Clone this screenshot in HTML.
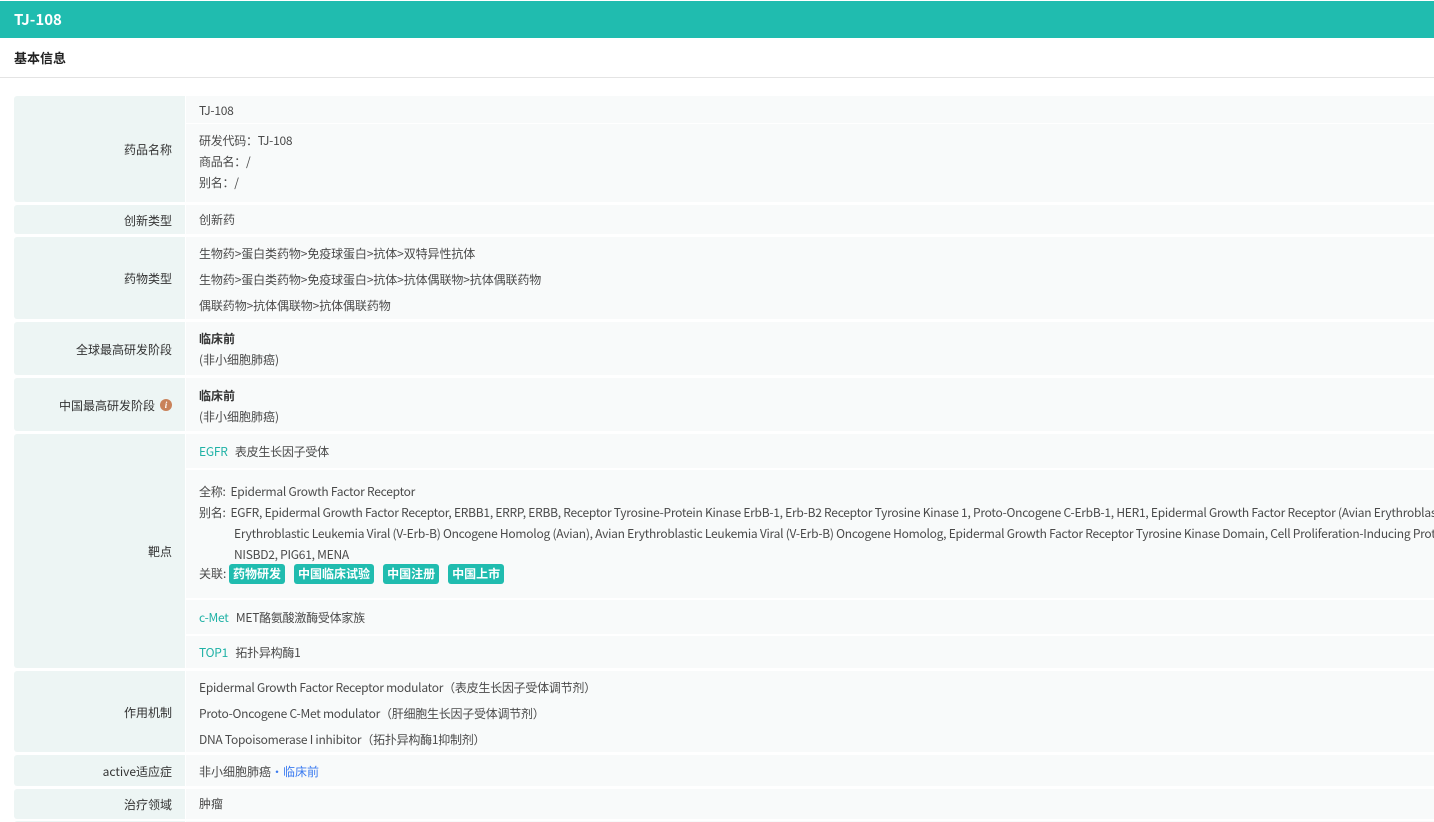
<!DOCTYPE html>
<html><head><meta charset="utf-8"><style>
*{margin:0;padding:0;box-sizing:border-box}
html,body{width:1434px;height:822px;overflow:hidden}
body{background:#fff;font-family:"Noto Sans CJK SC","Liberation Sans",sans-serif;font-size:12px;color:#444;position:relative}
#w{position:absolute;left:0;top:0;width:1434px;height:822px;overflow:hidden}
.hdr{position:absolute;left:0;top:1px;width:1434px;height:37px;background:#20bcaf;color:#fff;font-weight:bold;font-size:15px;line-height:37px;padding-left:14px}
.sec{position:absolute;left:14px;top:48px;line-height:20px;font-weight:bold;font-size:13px;color:#222}
.line{position:absolute;left:0;top:77px;width:1434px;height:1px;background:#e4e4e4}
.l{position:absolute;left:14px;width:171px;background:#edf5f4;text-align:right;padding-right:13px;display:flex;align-items:center;justify-content:flex-end;color:#333;border-radius:3px 0 0 3px;padding-top:1px}
.v{position:absolute;left:186px;width:1248px;background:#f8fafa}
.t{position:absolute;left:199px;white-space:nowrap;color:#4a4a4a;line-height:18px;letter-spacing:-0.25px;margin-top:1px}
.c{letter-spacing:0}
.teal{color:#20b2a6}
.b{font-weight:bold;color:#333}
.tag{display:inline-block;background:#20bcaf;color:#fff;font-weight:bold;padding:0 4px;border-radius:3px;height:20px;line-height:20px;margin-right:9px;letter-spacing:0}
.i{display:inline-block;width:12px;height:12px;border-radius:50%;background:#c9825a;color:#fff;font-size:9px;line-height:12px;text-align:center;font-style:italic;font-weight:bold;margin-left:5px;font-family:"Liberation Serif",serif}
</style></head><body><div id="w">
<div class="hdr">TJ-108</div>
<div class="sec">基本信息</div>
<div class="line"></div>

<div class="l" style="top:96px;height:106px">药品名称</div>
<div class="v" style="top:96px;height:27px"></div>
<div class="v" style="top:124px;height:78px"></div>
<div class="t" style="top:101px">TJ-108</div>
<div class="t" style="top:128.5px;line-height:21px">研发代码：TJ-108<br>商品名：/<br>别名：/</div>

<div class="l" style="top:205px;height:29px">创新类型</div>
<div class="v" style="top:205px;height:29px"></div>
<div class="t c" style="top:210px">创新药</div>

<div class="l" style="top:237px;height:82px">药物类型</div>
<div class="v" style="top:237px;height:82px"></div>
<div class="t" style="top:240px;line-height:26px;letter-spacing:-0.1px">生物药&gt;蛋白类药物&gt;免疫球蛋白&gt;抗体&gt;双特异性抗体<br>生物药&gt;蛋白类药物&gt;免疫球蛋白&gt;抗体&gt;抗体偶联物&gt;抗体偶联药物<br>偶联药物&gt;抗体偶联物&gt;抗体偶联药物</div>

<div class="l" style="top:322px;height:53px">全球最高研发阶段</div>
<div class="v" style="top:322px;height:53px"></div>
<div class="t c" style="top:326.5px;line-height:21px"><span class="b">临床前</span><br>(非小细胞肺癌)</div>

<div class="l" style="top:378px;height:53px">中国最高研发阶段<span class="i">i</span></div>
<div class="v" style="top:378px;height:53px"></div>
<div class="t c" style="top:383.5px;line-height:21px"><span class="b">临床前</span><br>(非小细胞肺癌)</div>

<div class="l" style="top:434px;height:234px">靶点</div>
<div class="v" style="top:434px;height:34px"></div>
<div class="v" style="top:470px;height:128px"></div>
<div class="v" style="top:600px;height:34px"></div>
<div class="v" style="top:636px;height:32px"></div>
<div class="t" style="top:442px"><span class="teal">EGFR</span>&nbsp;&nbsp; 表皮生长因子受体</div>
<div class="t" style="top:479.5px;line-height:21px">全称:&nbsp; Epidermal Growth Factor Receptor<br>别名:&nbsp; EGFR, Epidermal Growth Factor Receptor, ERBB1, ERRP, ERBB, Receptor Tyrosine-Protein Kinase ErbB-1, Erb-B2 Receptor Tyrosine Kinase 1, Proto-Oncogene C-ErbB-1, HER1, Epidermal Growth Factor Receptor (Avian Erythroblastic Leukemia</div>
<div class="t" style="top:521.5px;left:234px;line-height:21px">Erythroblastic Leukemia Viral (V-Erb-B) Oncogene Homolog (Avian), Avian Erythroblastic Leukemia Viral (V-Erb-B) Oncogene Homolog, Epidermal Growth Factor Receptor Tyrosine Kinase Domain, Cell Proliferation-Inducing Protein 61,<br>NISBD2, PIG61, MENA</div>
<div class="t c" style="top:563px;line-height:20px">关联:&nbsp;<span class="tag">药物研发</span><span class="tag">中国临床试验</span><span class="tag">中国注册</span><span class="tag">中国上市</span></div>
<div class="t" style="top:608px"><span class="teal">c-Met</span>&nbsp;&nbsp; MET酪氨酸激酶受体家族</div>
<div class="t" style="top:643px"><span class="teal">TOP1</span>&nbsp;&nbsp; 拓扑异构酶1</div>

<div class="l" style="top:671px;height:81px">作用机制</div>
<div class="v" style="top:671px;height:81px"></div>
<div class="t" style="top:674px;line-height:26px">Epidermal Growth Factor Receptor modulator（表皮生长因子受体调节剂）<br>Proto-Oncogene C-Met modulator（肝细胞生长因子受体调节剂）<br>DNA Topoisomerase I inhibitor（拓扑异构酶1抑制剂）</div>

<div class="l" style="top:755px;height:31px">active适应症</div>
<div class="v" style="top:755px;height:31px"></div>
<div class="t c" style="top:762px">非小细胞肺癌<span style="color:#3b7bf0">•临床前</span></div>

<div class="l" style="top:789px;height:30px">治疗领域</div>
<div class="v" style="top:789px;height:30px"></div>
<div class="t c" style="top:794px">肿瘤</div>

<div class="l" style="top:821px;height:10px"></div>
<div class="v" style="top:821px;height:10px"></div>
</div></body></html>
